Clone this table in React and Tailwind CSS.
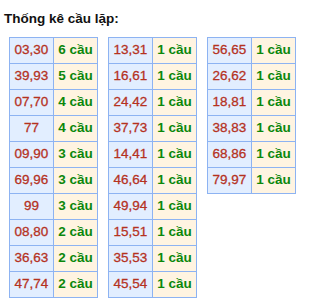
import React from "react";

const columns = [
  [
    ["03,30", "6 cầu"],
    ["39,93", "5 cầu"],
    ["07,70", "4 cầu"],
    ["77", "4 cầu"],
    ["09,90", "3 cầu"],
    ["69,96", "3 cầu"],
    ["99", "3 cầu"],
    ["08,80", "2 cầu"],
    ["36,63", "2 cầu"],
    ["47,74", "2 cầu"],
  ],
  [
    ["13,31", "1 cầu"],
    ["16,61", "1 cầu"],
    ["24,42", "1 cầu"],
    ["37,73", "1 cầu"],
    ["14,41", "1 cầu"],
    ["46,64", "1 cầu"],
    ["49,94", "1 cầu"],
    ["15,51", "1 cầu"],
    ["35,53", "1 cầu"],
    ["45,54", "1 cầu"],
  ],
  [
    ["56,65", "1 cầu"],
    ["26,62", "1 cầu"],
    ["18,81", "1 cầu"],
    ["38,83", "1 cầu"],
    ["68,86", "1 cầu"],
    ["79,97", "1 cầu"],
  ],
];

function PairTable({ rows }) {
  return (
    <table className="border-collapse self-start">
      <tbody>
        {rows.map(([pair, count]) => (
          <tr key={pair}>
            <td className="w-[44px] h-[26px] p-0 text-center border border-[#8db3f2] bg-[#e2eeff] text-[#b5321f] text-[13.5px] [-webkit-text-stroke:0.3px_#b5321f]">
              {pair}
            </td>
            <td className="w-[44px] h-[26px] p-0 text-center border border-[#8db3f2] bg-[#fff4e1] text-[#0b870b] text-[13.5px] font-bold">
              {count}
            </td>
          </tr>
        ))}
      </tbody>
    </table>
  );
}

export default function App() {
  return (
    <div className="w-[319px] h-[302px] bg-white font-['Liberation_Sans',Arial,sans-serif] pt-[10px]">
      <div className="pl-[4px] text-[13.5px] font-bold text-[#111] leading-[17px]">Thống kê cầu lặp:</div>
      <div className="flex gap-[10px] pl-[9px] mt-[10px]">
        {columns.map((rows, i) => (
          <PairTable key={i} rows={rows} />
        ))}
      </div>
    </div>
  );
}
